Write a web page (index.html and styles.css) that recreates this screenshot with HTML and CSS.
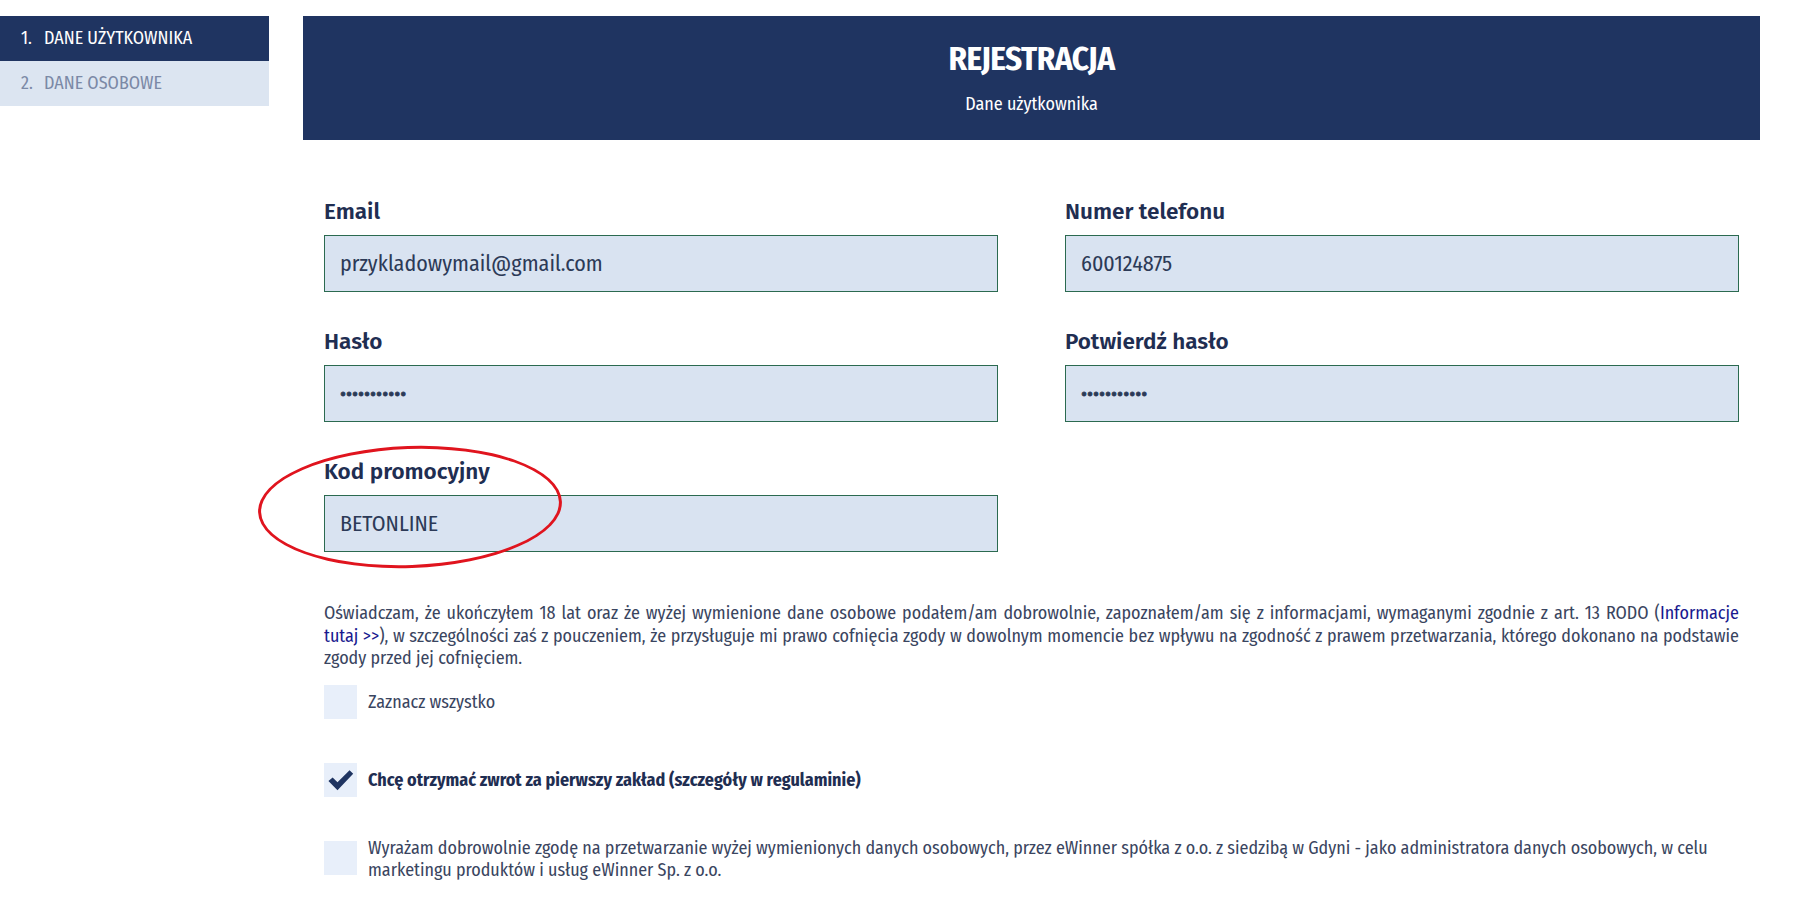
FILE: index.html
```html
<!DOCTYPE html>
<html lang="pl">
<head>
  <meta charset="UTF-8">
  <meta name="viewport" content="width=device-width, initial-scale=1.0">
  <title>Rejestracja</title>
  <link rel="stylesheet" href="styles.css">
</head>
<body>
  <div class="page">
    <ul class="steps">
      <li class="step active"><span class="num">1.</span>DANE UŻYTKOWNIKA</li>
      <li class="step"><span class="num">2.</span>DANE OSOBOWE</li>
    </ul>

    <div class="main">
      <div class="header">
        <h1>REJESTRACJA</h1>
        <div class="subtitle">Dane użytkownika</div>
      </div>

      <form class="form">
        <div class="fields">
          <div class="field">
            <label for="email">Email</label>
            <input type="text" id="email" value="przykladowymail@gmail.com">
          </div>
          <div class="field">
            <label for="phone">Numer telefonu</label>
            <input type="text" id="phone" value="600124875">
          </div>
          <div class="field">
            <label for="pass">Hasło</label>
            <input type="password" id="pass" value="abcdefghijk">
          </div>
          <div class="field">
            <label for="pass2">Potwierdź hasło</label>
            <input type="password" id="pass2" value="abcdefghijk">
          </div>
          <div class="field promo">
            <label for="promo">Kod promocyjny</label>
            <input type="text" id="promo" value="BETONLINE">
            <span class="circle"></span>
          </div>
        </div>

        <p class="statement">Oświadczam, że ukończyłem 18 lat oraz że wyżej wymienione dane osobowe podałem/am dobrowolnie, zapoznałem/am się z informacjami, wymaganymi zgodnie z art. 13 RODO (<a href="#">Informacje tutaj&nbsp;&gt;&gt;</a>), w szczególności zaś z pouczeniem, że przysługuje mi prawo cofnięcia zgody w dowolnym momencie bez wpływu na zgodność z prawem przetwarzania, którego dokonano na podstawie zgody przed jej cofnięciem.</p>

        <div class="check">
          <span class="box"></span>
          <span class="check-text">Zaznacz wszystko</span>
        </div>
        <div class="check">
          <span class="box checked">
            <svg viewBox="0 0 24 24" width="29" height="29"><path d="M2 12.5 L5.5 9.5 L9.5 13.5 L19.5 3.5 L22.5 6.5 L9.5 20 Z" fill="#1f3461"/></svg>
          </span>
          <span class="check-text strong">Chcę otrzymać zwrot za pierwszy zakład (szczegóły w regulaminie)</span>
        </div>
        <div class="check top">
          <span class="box"></span>
          <span class="check-text">Wyrażam dobrowolnie zgodę na przetwarzanie wyżej wymienionych danych osobowych, przez eWinner spółka z o.o. z siedzibą w Gdyni - jako administratora danych osobowych, w celu marketingu produktów i usług eWinner Sp. z o.o.</span>
        </div>
      </form>
    </div>
  </div>
</body>
</html>
```

FILE: styles.css
```css
body {
  margin: 0;
  font-family: "Fira Sans Condensed", "Liberation Sans Narrow", "DejaVu Sans Condensed", "Roboto", sans-serif;
  color: #2c3a57;
  background: #fff;
}
.page {
  display: flex;
  gap: 34px;
  padding: 16px 34px 0 0;
}
.steps {
  list-style: none;
  margin: 0;
  padding: 0;
  width: 269px;
  flex-shrink: 0;
}
.step {
  height: 45px;
  line-height: 45px;
  padding-left: 21px;
  font-size: 18px;
  background: #dce5f1;
  color: #7b89a6;
}
.step .num {
  display: inline-block;
  width: 23px;
}
.step.active {
  background: #1f3461;
  color: #fff;
}
.main {
  flex: 1;
}
.header {
  height: 124px;
  background: #1f3461;
  color: #fff;
  text-align: center;
  box-sizing: border-box;
  padding-top: 24px;
}
.header h1 {
  margin: 0;
  font-size: 33px;
  line-height: 38px;
  font-weight: bold;
  letter-spacing: -0.5px;
}
.subtitle {
  margin-top: 15px;
  font-size: 18px;
}
.form {
  padding: 60px 21px 40px;
}
.fields {
  display: grid;
  grid-template-columns: 1fr 1fr;
  column-gap: 67px;
  row-gap: 38px;
}
.field {
  position: relative;
}
.field label {
  display: block;
  font-family: "Fira Sans", "Fira Sans Condensed", sans-serif;
  font-size: 22.5px;
  line-height: 24px;
  font-weight: 600;
  color: #1f2e52;
  margin-bottom: 11px;
}
.field input {
  display: block;
  width: 100%;
  height: 57px;
  box-sizing: border-box;
  border: 1px solid #2b6a50;
  background: #d9e3f1;
  padding: 0 15px;
  font-family: inherit;
  font-size: 22px;
  color: #2c3a57;
  outline: none;
}
.field input[type="password"] {
  font-size: 20px;
  letter-spacing: 0;
  -webkit-text-stroke: 0.8px #2c3a57;
}
.circle {
  position: absolute;
  left: -66px;
  top: -14px;
  width: 298px;
  height: 116px;
  border: 3px solid #e0141e;
  border-radius: 50%;
  transform: rotate(-2deg);
  pointer-events: none;
}
.statement {
  margin: 50px 0 15px;
  font-size: 18px;
  line-height: 22.5px;
  text-align: justify;
  color: #3a4560;
}
.statement a {
  color: #1a1a8f;
  text-decoration: none;
}
.check {
  display: flex;
  align-items: center;
  gap: 11px;
  margin-bottom: 44px;
  font-size: 18px;
  color: #3a4560;
}
.check.top {
  align-items: flex-start;
}
.check.top .check-text {
  line-height: 22.5px;
  margin-top: -4px;
}
.box {
  width: 33px;
  height: 34px;
  flex-shrink: 0;
  background: #e8effa;
  position: relative;
}
.box svg {
  position: absolute;
  left: 2px;
  top: 3px;
}
.check-text.strong {
  font-weight: bold;
  color: #1f2e52;
}
```
